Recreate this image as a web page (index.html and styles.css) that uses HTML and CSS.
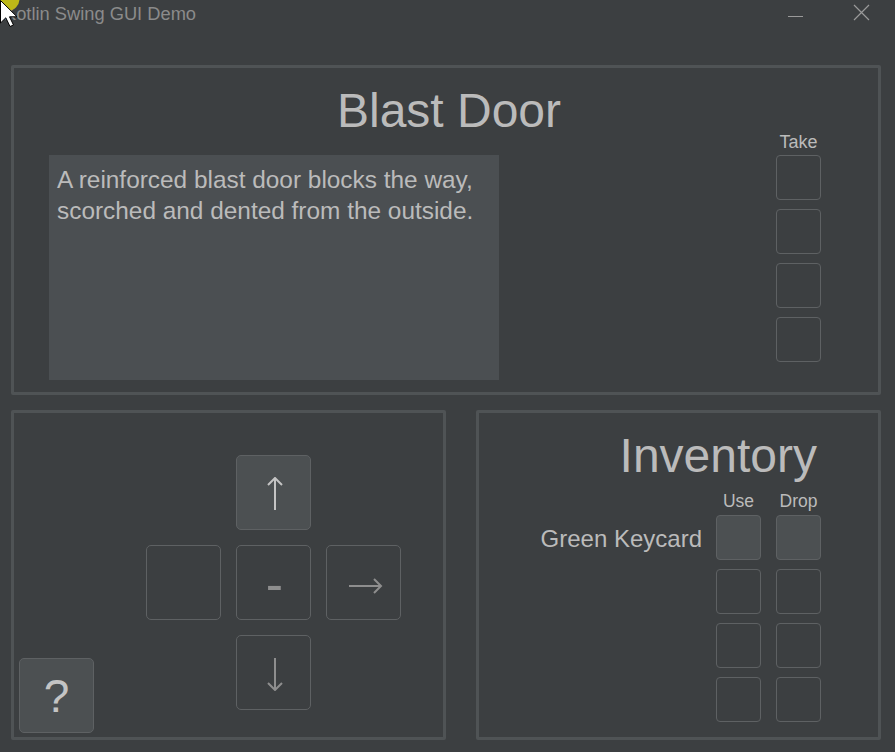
FILE: index.html
```html
<!DOCTYPE html>
<html lang="en">
<head>
<meta charset="utf-8">
<title>Kotlin Swing GUI Demo</title>
<link rel="stylesheet" href="styles.css">
</head>
<body>
<div class="window">
  <header class="titlebar">
    <span class="title">Kotlin Swing GUI Demo</span>
    <div class="controls">
      <svg class="ctl" width="16" height="16" viewBox="0 0 16 16"><path d="M0 12.5 H15" stroke="#9a9a9a" stroke-width="1"/></svg>
      <svg class="ctl" width="17" height="17" viewBox="0 0 17 17"><path d="M1 1 L16 16 M16 1 L1 16" stroke="#9a9a9a" stroke-width="1.2"/></svg>
    </div>
  </header>
  <main class="content">
    <section class="panel room">
      <h1 class="room-title">Blast Door</h1>
      <div class="room-body">
        <div class="description">A reinforced blast door blocks the way,<br>scorched and dented from the outside.</div>
        <div class="take-col">
          <div class="col-label take-label">Take</div>
          <button class="slot"></button>
          <button class="slot"></button>
          <button class="slot"></button>
          <button class="slot"></button>
        </div>
      </div>
    </section>
    <div class="bottom-row">
      <section class="panel nav">
        <button class="big-btn filled help">?</button>
        <div class="dpad">
          <span class="cell"></span>
          <button class="big-btn filled">
            <svg width="18" height="34" viewBox="0 0 18 34"><path d="M9 1 V33 M2 8 L9 1 L16 8" fill="none" stroke="#c4c4c4" stroke-width="2"/></svg>
          </button>
          <span class="cell"></span>
          <button class="big-btn"></button>
          <button class="big-btn hyphen">-</button>
          <button class="big-btn">
            <svg class="arr-right" width="34" height="18" viewBox="0 0 34 18"><path d="M0 9 H32 M25 2 L32 9 L25 16" fill="none" stroke="#8e8e8e" stroke-width="2"/></svg>
          </button>
          <span class="cell"></span>
          <button class="big-btn">
            <svg class="arr-down" width="18" height="34" viewBox="0 0 18 34"><path d="M9 1 V33 M2 26 L9 33 L16 26" fill="none" stroke="#8e8e8e" stroke-width="2"/></svg>
          </button>
          <span class="cell"></span>
        </div>
      </section>
      <section class="panel inventory">
        <h2 class="inv-title">Inventory</h2>
        <div class="inv-grid">
          <span></span>
          <span class="col-label">Use</span>
          <span class="col-label">Drop</span>
          <span class="item-name">Green Keycard</span>
          <button class="slot filled"></button>
          <button class="slot filled"></button>
          <span></span>
          <button class="slot"></button>
          <button class="slot"></button>
          <span></span>
          <button class="slot"></button>
          <button class="slot"></button>
          <span></span>
          <button class="slot"></button>
          <button class="slot"></button>
        </div>
      </section>
    </div>
  </main>
  <svg class="cursor" width="30" height="30" viewBox="0 0 30 30">
    <circle cx="8" cy="-1" r="11.5" fill="#bdb818"/>
    <path d="M0.5 0.5 L0.5 23 L5.8 17.8 L10 26.5 L13.5 25 L9.5 16.8 L17 16.8 Z" fill="#ffffff" stroke="#000000" stroke-width="1"/>
  </svg>
</div>
</body>
</html>
```

FILE: styles.css
```css
* {
  box-sizing: border-box;
}

html, body {
  margin: 0;
  padding: 0;
  background: #3c3f41;
}

body {
  font-family: "Liberation Sans", Arial, sans-serif;
  color: #bbbbbb;
}

.window {
  position: relative;
  width: 895px;
  height: 752px;
  overflow: hidden;
  background: #3c3f41;
}

.titlebar {
  height: 30px;
  display: flex;
  justify-content: space-between;
  align-items: flex-start;
  padding: 0 25px 0 4px;
}

.title {
  font-size: 18.3px;
  line-height: 28px;
  color: #8b8b8b;
}

.controls {
  display: flex;
  align-items: flex-start;
  gap: 49px;
  padding-top: 4px;
}

.ctl {
  display: block;
}

.content {
  display: flex;
  flex-direction: column;
  gap: 15px;
  padding: 35px 14px 12px 11px;
}

.panel {
  border: 3px solid #4f5355;
  border-radius: 2px;
}

.room {
  height: 330px;
  padding-top: 21px;
}

.room-title {
  margin: 0;
  padding-left: 6px;
  font-size: 48px;
  line-height: 44px;
  font-weight: normal;
  text-align: center;
}

.room-body {
  display: flex;
  justify-content: space-between;
  align-items: flex-start;
  padding: 0 57px 0 35px;
}

.description {
  margin-top: 22px;
  width: 450px;
  height: 225px;
  background: #4b4f52;
  padding: 9px 8px;
  font-size: 24.4px;
  line-height: 31px;
}

.take-col {
  display: flex;
  flex-direction: column;
  gap: 9px;
}

.col-label {
  font-size: 17.5px;
  line-height: 18px;
  text-align: center;
}

.take-label {
  font-size: 18px;
  margin-bottom: -5px;
}

.slot {
  display: block;
  width: 45px;
  height: 45px;
  padding: 0;
  margin: 0;
  border: 1px solid #5e6163;
  border-radius: 4px;
  background: transparent;
}

.filled {
  background: #4c5052;
}

.bottom-row {
  display: flex;
  gap: 30px;
  height: 330px;
}

.nav {
  width: 435px;
  display: flex;
  align-items: flex-start;
  padding: 42px 0 4px 5px;
}

.big-btn {
  width: 75px;
  height: 75px;
  padding: 0;
  margin: 0;
  border: 1px solid #5e6163;
  border-radius: 5px;
  background: transparent;
  display: flex;
  align-items: center;
  justify-content: center;
  font-family: "Liberation Sans", Arial, sans-serif;
  color: #8e8e8e;
}

.big-btn.filled {
  background: #4c5052;
  color: #c4c4c4;
}

.help {
  align-self: flex-end;
  font-size: 46px;
  line-height: 73px;
  padding-top: 1px;
}

.dpad {
  margin-left: 52px;
  display: grid;
  grid-template-columns: repeat(3, 75px);
  grid-template-rows: repeat(3, 75px);
  gap: 15px;
}

.dpad svg {
  display: block;
  margin-left: 3px;
  margin-top: 3px;
}

.dpad .arr-right {
  margin-left: 5px;
  margin-top: 6px;
}

.hyphen {
  font-size: 52px;
  line-height: 73px;
  padding-top: 4px;
  padding-left: 2px;
  color: #8e8e8e;
}

.inventory {
  flex: 1;
  display: flex;
  flex-direction: column;
  align-items: flex-end;
  padding: 21px 57px 0 0;
}

.inv-title {
  margin: 0 4px 14px 0;
  font-size: 48px;
  line-height: 44px;
  font-weight: normal;
}

.inv-grid {
  display: grid;
  grid-template-columns: auto 45px 45px;
  column-gap: 15px;
  row-gap: 9px;
}

.inv-grid .col-label {
  margin-bottom: -4px;
}

.item-name {
  font-size: 24px;
  line-height: 42px;
  margin-top: 3px;
  margin-right: -1px;
}

.cursor {
  position: absolute;
  top: 0;
  left: 0;
  overflow: visible;
}
```
